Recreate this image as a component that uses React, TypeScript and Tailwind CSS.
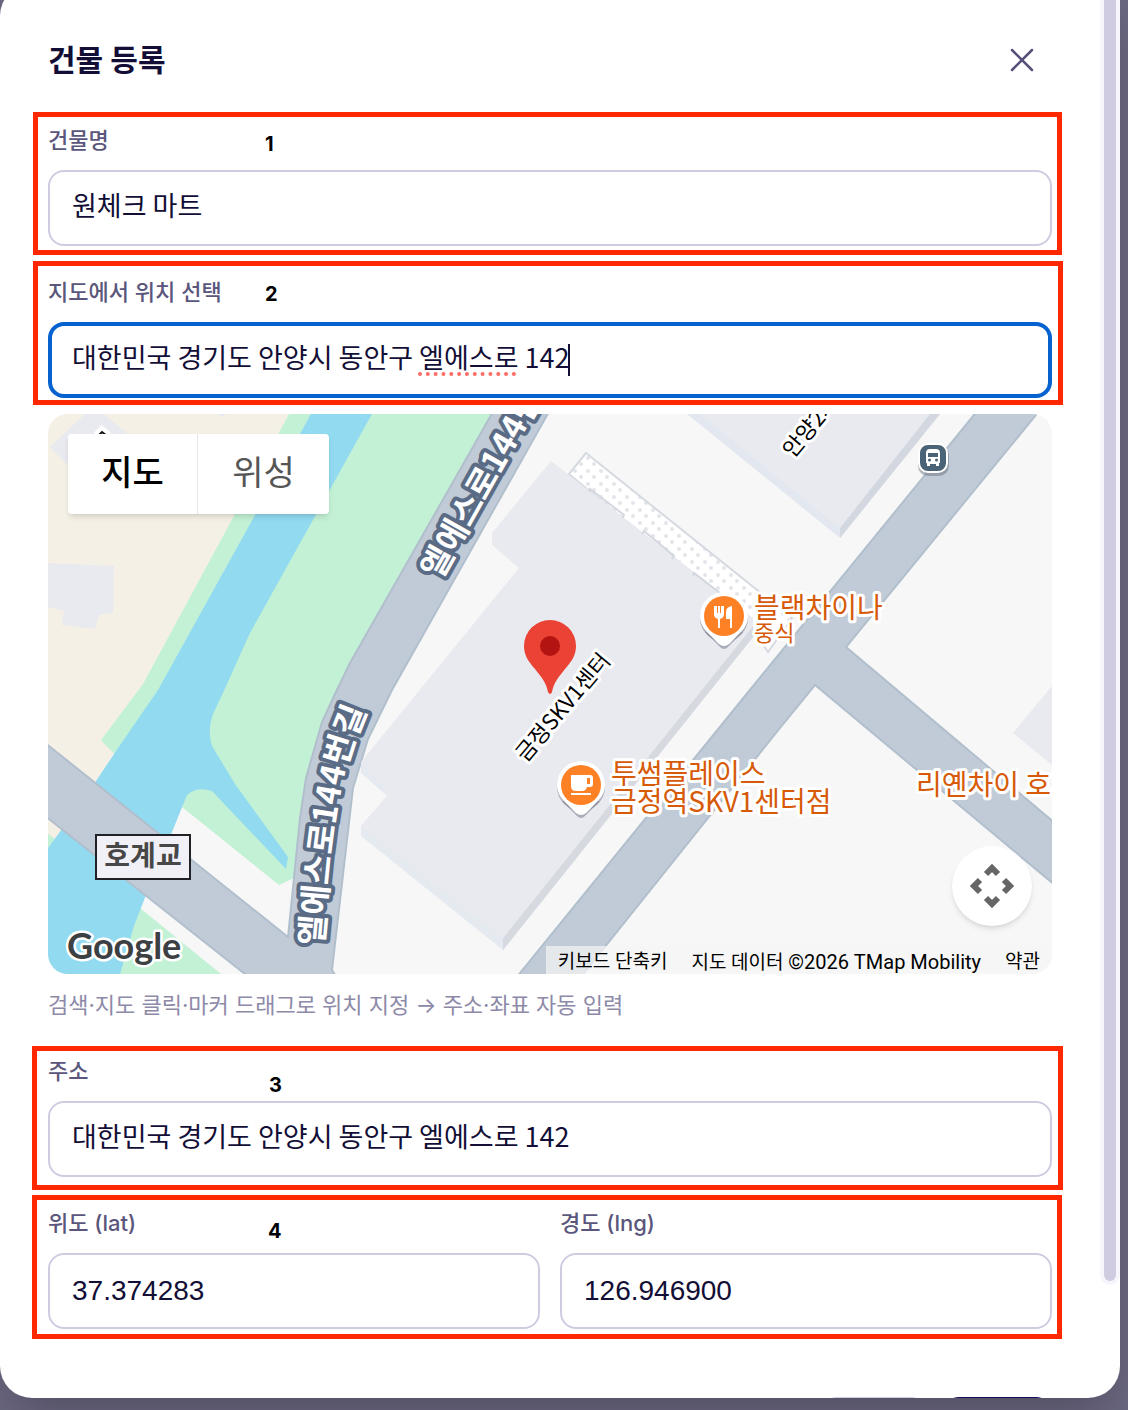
import React from 'react'
import { X } from 'lucide-react'
import clsx from 'clsx'

type FieldProps = {
    id: string
    label: string
    value: string
    numeric?: boolean
    active?: boolean
    children?: React.ReactNode
}

function Field({ id, label, value, numeric, active, children }: FieldProps) {
    return (
        <div className="min-w-0 flex-1">
            <label htmlFor={id} className="mb-3 block text-[22px] leading-9 font-medium text-[#5a567c]">
                {label}
            </label>
            <div className="relative">
                <input
                    id={id}
                    type="text"
                    defaultValue={value}
                    spellCheck={false}
                    className={clsx(
                        'block h-[76px] w-full rounded-2xl bg-white text-[#120e36] outline-none',
                        active ? 'border-4 border-[#0562cf] px-5' : 'border-2 border-[#cfcce2] px-[22px]',
                        numeric
                            ? "font-['Liberation_Sans',sans-serif] text-[28px]"
                            : "pb-2 font-['Noto_Sans_CJK_KR',sans-serif] text-[27px]"
                    )}
                />
                {children}
            </div>
        </div>
    )
}

// red call-out frame drawn over a group of fields
function Callout({ step, frame, badge, children }: { step: number; frame: string; badge: string; children: React.ReactNode }) {
    return (
        <section className="relative">
            {children}
            <div className={clsx('pointer-events-none absolute border-[5px] border-[#ff2800]', frame)} />
            <span className={clsx('pointer-events-none absolute text-[20px] leading-6 font-bold text-black', badge)}>{step}</span>
        </section>
    )
}

function PoiPin({ x, y, children }: { x: number; y: number; children: React.ReactNode }) {
    return (
        <g transform={`translate(${x} ${y})`}>
            <path d="M-19 16 L-4 31 Q0 35 4 31 L19 16 Z" fill="#6b7280" opacity="0.5" />
            <circle r="24" cy="2" fill="#6b7280" opacity="0.45" />
            <path d="M-24 0 A24 24 0 1 1 24 0 C24 10 17 16 12 21 L5 28 Q0 32 -5 28 L-12 21 C-17 16 -24 10 -24 0 Z" fill="#fff" />
            <circle r="20" fill="#ff8126" />
            {children}
        </g>
    )
}

function MapCanvas() {
    return (
        <svg
            viewBox="48 414 1004 560"
            preserveAspectRatio="xMidYMid slice"
            className="block h-full w-full font-['Noto_Sans_CJK_KR',sans-serif]"
            role="img"
            aria-label="지도"
        >
            <defs>
                <pattern id="dots" width="13" height="13" patternUnits="userSpaceOnUse">
                    <circle cx="3" cy="3" r="2" fill="#e3e5ea" />
                    <circle cx="9" cy="9" r="2" fill="#e3e5ea" />
                </pattern>
                <path id="lane" d="M323 946 C327 905 330 860 336 822 C340 795 346 762 356 738 C362 722 368 708 376 690" />
            </defs>

            <rect x="48" y="414" width="1004" height="560" fill="#f7f7f7" />

            {/* land, park and river */}
            <path d="M48 414 H289 L143 684 L101 740 L115 751 L97 781 L62 829 L48 850 Z" fill="#f4f0e5" />
            <path d="M289 414 H492 L421 540 L350 663 L322 722 L306 778 L294 878 L279 885 L182 807 L120 760 L101 740 L143 684 Z" fill="#c3f1d5" />
            <path d="M48 834 L56 840 L48 850 Z" fill="#c3f1d5" />
            <path d="M140 908 L221 974 H118 L134 920 Z" fill="#c3f1d5" />
            <path
                d="M311 414 H372 L250 633 L222 695 L213 714 Q207 732 212 746 L235 784 L288 857 L286 869 L212 791 Q197 786 187 795 L172 832 L146 895 L134 926 L120 974 H48 V848 L62 829 L96 781 L116 751 L158 690 Z"
                fill="#92daf0"
            />

            {/* roads */}
            <g fill="#c1cbd8" stroke="#b1bfcd" strokeWidth="2">
                <path d="M44 742 L288 937 L300 818 L306 778 L322 722 L335 694 L350 663 L494 410 H550 L392 690 L368 739 L353 788 L332 970 L337 978 H250 L44 815 Z" />
                <path d="M978 410 L745 696 L516 978 H580 L780 728 L815 685 L1056 886 V824 L846 647 L1040 410 Z" />
            </g>

            {/* buildings */}
            <path d="M85 414 L50 447 L78 475 L135 440 L104 414 Z M218 414 L222 417 L226 414 Z" fill="#e9eaf0" />
            <path d="M48 563 L114 566 L113 613 L99 615 L95 629 L62 625 L64 611 L48 607 Z" fill="#e9eaf0" />
            <path d="M1052 686 L1013 733 L1052 765 Z" fill="#e9eaf0" />
            <path d="M687 414 L840 538 L940 414 Z" fill="#e3e8f0" />
            <path d="M700 414 L840 528 L930 414 Z" fill="#e9eaf0" />
            <path d="M840 528 V538 L940 414 H930 Z" fill="#d3d8e0" />
            <path d="M361 762 V773 L387 796 L361 826 V836 L503 950 L760 628 L600 600 Z" fill="#e5e9f0" />
            <path d="M503 938 V950 L762 626 L753 626 Z" fill="#d6d9e0" />
            <path d="M586 453 L792 618 L768 652 L750 624 L569 474 Z" fill="#fff" />
            <path d="M586 453 L792 618 L768 652 L750 624 L569 474 Z" fill="url(#dots)" stroke="#d5d9e0" strokeWidth="2" />
            <path
                d="M551 461 L492 533 V545 L519 568 L361 762 L387 790 V796 L361 826 L503 938 L753 626 V618 Z"
                fill="#e9eaf0"
            />
            <path d="M589 492 L590 489 L624 515 L622 518 M642 534 L644 531 L674 556 L672 559 M693 576 L694 573 L720 593" fill="none" stroke="#d3d7df" strokeWidth="2" />
            <path d="M97 436 L102 431 L108 436" fill="none" stroke="#fff" strokeWidth="9" />
            <path d="M98 436 L102 432 L107 436" fill="none" stroke="#111" strokeWidth="2" />

            {/* street names */}
            <g fontSize="33" fontWeight="700" fill="#fff" stroke="#5a6b85" strokeWidth="8" strokeLinejoin="round" paintOrder="stroke">
                <text transform="translate(440 581) rotate(-60.5)">엘에스로144번길</text>
                <text>
                    <textPath href="#lane">엘에스로144번길</textPath>
                </text>
            </g>
            <g fontSize="22" fill="#000" stroke="#fff" strokeWidth="6" strokeLinejoin="round" paintOrder="stroke">
                <text transform="translate(526 763) rotate(-50)">금정SKV1센터</text>
                <text transform="translate(793 459) rotate(-50)">안양2차</text>
            </g>

            {/* places */}
            <g fontSize="28" fill="#d65a08" stroke="#fff" strokeWidth="6" strokeLinejoin="round" paintOrder="stroke">
                <text x="754" y="618">블랙차이나</text>
                <text x="754" y="641" fontSize="22">중식</text>
                <text x="611" y="784">투썸플레이스</text>
                <text x="611" y="812">금정역SKV1센터점</text>
                <text x="916" y="795">리옌차이 호계점</text>
            </g>

            <PoiPin x={724} y={616}>
                <path
                    d="M-10 -10 H-7 V-3 H-6 V-10 H-4 V-3 H-3 V-10 H0 V-2 Q0 2 -4 3 V12 H-6 V3 Q-10 2 -10 -2 Z M8 -10 V12 H6 V3 H2 V-4 Q2 -9 8 -10 Z"
                    fill="#fff"
                />
            </PoiPin>
            <PoiPin x={581} y={785}>
                <path d="M-10 -10 H9 Q12 -10 12 -7 V-1 Q12 2 9 2 H6 Q5 6 1 6 H-5 Q-10 6 -10 1 Z M6 -7 V-1 H9 V-7 Z" fill="#fff" fillRule="evenodd" />
                <path d="M-10 8 H10 V10 H-10 Z" fill="#fff" />
            </PoiPin>

            {/* bus stop */}
            <rect x="918" y="445" width="31" height="31" rx="10" fill="#6b7280" opacity="0.5" />
            <rect x="919" y="444" width="28" height="28" rx="9" fill="#4a6376" stroke="#fff" strokeWidth="2" />
            <path
                d="M926 453 Q926 449 930 449 H936 Q940 449 940 453 V463 H939 V466 H936 V464 H930 V466 H927 V463 H926 Z M928 453 V457 H938 V453 Z M928 460 A1 1 0 0 0 931 460 A1 1 0 0 0 928 460 Z M935 460 A1 1 0 0 0 938 460 A1 1 0 0 0 935 460 Z"
                fill="#fff"
                fillRule="evenodd"
            />

            {/* dropped marker */}
            <path d="M550 620 A26 26 0 0 1 576 646 C576 656 571 662 565 669 C558 678 554 682 552 692 Q550 696 548 692 C546 682 542 678 535 669 C529 662 524 656 524 646 A26 26 0 0 1 550 620 Z" fill="#ea4335" />
            <circle cx="550" cy="646" r="10" fill="#b31412" />

            <rect x="96" y="835" width="94" height="44" fill="#f1f0f6" stroke="#1f2124" strokeWidth="2" />
            <text x="143" y="866" fontSize="28" fontWeight="700" fill="#474747" textAnchor="middle">호계교</text>

            <text x="67" y="959" fontSize="36" fontWeight="700" fontFamily="Lato, sans-serif" fill="#3c4043" stroke="#fff" strokeWidth="5" strokeLinejoin="round" paintOrder="stroke">
                Google
            </text>
        </svg>
    )
}

function LocationMap() {
    return (
        <div className="relative mt-4 h-[560px] overflow-hidden rounded-[20px]">
            <MapCanvas />
            <div className="absolute top-5 left-5 flex h-20 rounded-sm text-[34px] shadow-md">
                <button type="button" className="w-[130px] rounded-l-sm border-r border-gray-200 bg-white pb-1 font-medium text-black">
                    지도
                </button>
                <button type="button" className="w-[131px] rounded-r-sm bg-white pb-1 text-[#565656]">
                    위성
                </button>
            </div>
            <button
                type="button"
                aria-label="지도 카메라 컨트롤"
                className="absolute right-5 bottom-12 flex size-20 items-center justify-center rounded-full bg-white shadow-md"
            >
                <svg viewBox="0 0 48 48" className="size-12" fill="none" stroke="#666" strokeWidth="6">
                    <path d="M18 12 L24 6 L30 12 M18 36 L24 42 L30 36 M12 18 L6 24 L12 30 M36 18 L42 24 L36 30" />
                </svg>
            </button>
            <div className="absolute right-0 bottom-0 flex h-7 items-center gap-6 bg-[#f5f5f5]/70 px-3 pt-1 font-[Roboto,'Noto_Sans_CJK_KR',sans-serif] text-[19px] leading-6 text-black">
                <button type="button">키보드 단축키</button>
                <span>
                    지도 데이터 <span className="text-[20px]">©2026 TMap Mobility</span>
                </span>
                <a href="#terms" className="border-b border-gray-400">약관</a>
            </div>
        </div>
    )
}

export default function App() {
    return (
        <div className="flex h-screen flex-col overflow-hidden bg-[#6a6781] pr-2 pb-3 font-[Inter,'Noto_Sans_CJK_KR',sans-serif]">
            <div
                role="dialog"
                aria-labelledby="dialog-title"
                className="-mt-4 flex min-h-0 flex-1 overflow-hidden rounded-[32px] rounded-tr-none bg-white pt-4 shadow-2xl"
            >
                <div className="min-w-0 flex-1 overflow-hidden px-12 pt-[30px]">
                    <header className="flex items-center justify-between">
                        <h1 id="dialog-title" className="text-[30px] font-bold text-[#120e36]">건물 등록</h1>
                        <button type="button" aria-label="닫기" className="flex size-[60px] items-center justify-center text-[#55517a]">
                            <X className="size-10" strokeWidth={1.5} />
                        </button>
                    </header>

                    <form className="mt-8 flex flex-col gap-7">
                        <Callout step={1} frame="-top-[10px] -right-[10px] -bottom-[9px] -left-[15px]" badge="top-2.5 left-[217px]">
                            <Field id="name" label="건물명" value="원체크 마트" />
                        </Callout>

                        <div>
                            <Callout step={2} frame="-top-[13px] -right-[11px] -bottom-[7px] -left-[15px]" badge="top-2 left-[217px]">
                                <Field id="search" label="지도에서 위치 선택" value="대한민국 경기도 안양시 동안구 엘에스로 142" active>
                                    {/* spell-check dots and caret */}
                                    <span className="absolute bottom-[22px] left-[370px] w-[98px] border-b-4 border-dotted border-[#ff6b66]" />
                                    <span className="absolute top-[22px] left-[520px] h-8 w-0.5 bg-[#120e36]" />
                                </Field>
                            </Callout>
                            <LocationMap />
                            <p className="mt-[11px] text-[22px] leading-10 text-[#8d89a8]">
                                검색·지도 클릭·마커 드래그로 위치 지정 → 주소·좌표 자동 입력
                            </p>
                        </div>

                        <Callout step={3} frame="-top-[7px] -right-[11px] -bottom-[13px] -left-[16px]" badge="top-5 left-[221px]">
                            <Field id="address" label="주소" value="대한민국 경기도 안양시 동안구 엘에스로 142" />
                        </Callout>

                        <Callout step={4} frame="-top-[10px] -right-[10px] -bottom-[10px] -left-[16px]" badge="top-3.5 left-[220px]">
                            <div className="flex gap-5">
                                <Field id="lat" label="위도 (lat)" value="37.374283" numeric />
                                <Field id="lng" label="경도 (lng)" value="126.946900" numeric />
                            </div>
                        </Callout>
                    </form>

                    <footer className="mt-[68px] flex justify-end gap-4 text-[26px]">
                        <button type="button" className="h-[76px] w-[106px] rounded-2xl border-2 border-[#cfcce2]">취소</button>
                        <button type="button" className="h-[76px] w-[109px] rounded-2xl bg-[#120e5a] text-white">저장</button>
                    </footer>
                </div>

                {/* scrollbar thumb */}
                <div className="-mt-4 w-5 shrink-0">
                    <div className="h-[92%] rounded-b-full border-4 border-t-0 border-[#f6f5fb] bg-[#cfcce2]" />
                </div>
            </div>
        </div>
    )
}
